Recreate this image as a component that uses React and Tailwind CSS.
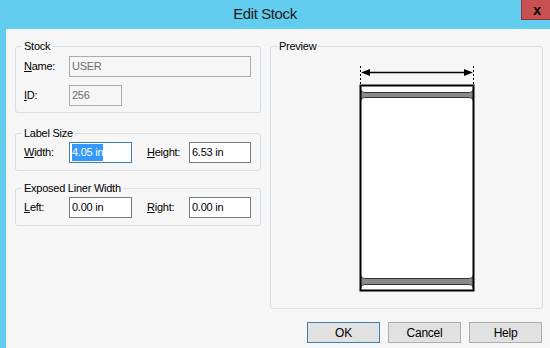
import React from 'react';

function Group({ title, className = '', children }) {
    return (
        <fieldset className={`rounded-[3px] border border-[#d5dfe5] px-[8px] ${className}`}>
            <legend className="-ml-[2px] px-[2px] leading-[14px]">{title}</legend>
            {children}
        </fieldset>
    );
}

// text box look-alike (a real input can't show the forced selection)
function Box({ className = '', disabled, focused, children }) {
    const border = disabled ? 'border-[#acacac] bg-[#f6f6f6] text-[#6d6d6d]' : focused ? 'border-[#3c7fb1] bg-white' : 'border-[#7a7a7a] bg-white';
    return (
        <div className={`h-[21px] border pl-[2px] flex items-center ${border} ${className}`}>
            {children}
        </div>
    );
}

function Label({ k, rest, className = 'w-[45px]' }) {
    return (
        <span className={className}>
            <u>{k}</u>{rest}
        </span>
    );
}

function LabelPreview() {
    return (
        <svg width="130" height="235" viewBox="0 0 130 235" className="block ml-[73px] mt-[9px]">
            <defs>
                <clipPath id="lbl">
                    <rect x="8" y="23" width="114" height="206" />
                </clipPath>
            </defs>
            <line x1="8.5" y1="4" x2="8.5" y2="23" stroke="#000" strokeDasharray="2 2" />
            <line x1="121.5" y1="4" x2="121.5" y2="23" stroke="#000" strokeDasharray="2 2" />
            <line x1="12" y1="10.5" x2="118" y2="10.5" stroke="#000" strokeWidth="1.5" />
            <polygon points="9,10.5 18,7 18,14" fill="#000" />
            <polygon points="121,10.5 112,7 112,14" fill="#000" />
            <g clipPath="url(#lbl)">
                <rect x="8" y="23" width="114" height="206" fill="#8a8a8a" />
                <rect x="8.5" y="10" width="113" height="20.5" rx="4" fill="#fff" stroke="#333" />
                <rect x="8.5" y="35.5" width="113" height="181" rx="4" fill="#fff" stroke="#333" />
                <rect x="8.5" y="222.5" width="113" height="20" rx="4" fill="#fff" stroke="#333" />
            </g>
            <rect x="8.5" y="23.5" width="113" height="205" fill="none" stroke="#000" strokeWidth="2" />
        </svg>
    );
}

export default function App() {
    return (
        <div className="w-[550px] h-[348px] overflow-hidden bg-[#62cdef] flex flex-col font-['Liberation_Sans',Arial,sans-serif] text-[11px] tracking-[-0.25px] text-black">
            {/* title bar */}
            <div className="h-[29px] shrink-0 flex items-center">
                <div className="flex-1 flex justify-center pl-[9px] text-[15px] tracking-[-0.4px] text-[#1a1a1a]">
                    Edit Stock
                </div>
                <div className="self-start w-[29px] h-[20px] bg-[#c75050] border-l border-b border-[#8a3535] flex items-center justify-center pl-[2px] text-[14px] font-bold text-black leading-none">
                    x
                </div>
            </div>

            {/* client area */}
            <div className="flex-1 ml-[6px] bg-[#f6f6f6] pt-[10px] pl-[9px] pr-[7px]">
                <div className="flex gap-[9px]">
                    <div className="w-[246px] flex flex-col">
                        <Group title="Stock" className="pt-[3px] pb-[6px]">
                            <div className="flex items-center">
                                <Label k="N" rest="ame:" />
                                <Box disabled className="w-[182px]">USER</Box>
                            </div>
                            <div className="flex items-center mt-[8px]">
                                <Label k="I" rest="D:" />
                                <Box disabled className="w-[53px]">256</Box>
                            </div>
                        </Group>

                        <Group title="Label Size" className="mt-[13px] pt-[2px] pb-[7px]">
                            <div className="flex items-center">
                                <Label k="W" rest="idth:" />
                                <Box focused className="w-[63px]">
                                    <span className="bg-[#3399ff] text-white">4.05 in</span>
                                </Box>
                                <Label k="H" rest="eight:" className="ml-[15px] w-[42px]" />
                                <Box className="w-[62px]">6.53 in</Box>
                            </div>
                        </Group>

                        <Group title="Exposed Liner Width" className="mt-[10px] pt-[2px] pb-[7px]">
                            <div className="flex items-center">
                                <Label k="L" rest="eft:" />
                                <Box className="w-[63px]">0.00 in</Box>
                                <Label k="R" rest="ight:" className="ml-[15px] w-[42px]" />
                                <Box className="w-[62px]">0.00 in</Box>
                            </div>
                        </Group>
                    </div>

                    <Group title="Preview" className="w-[273px] h-[270px]">
                        <LabelPreview />
                    </Group>
                </div>

                <div className="mt-[13px] pr-[1px] flex justify-end gap-[8px] text-[12px]">
                    <button className="w-[73px] h-[21px] bg-[#e1e1e1] border border-[#3c7fb1]">OK</button>
                    <button className="w-[73px] h-[21px] bg-[#e1e1e1] border border-[#adadad]">Cancel</button>
                    <button className="w-[73px] h-[21px] bg-[#e1e1e1] border border-[#adadad]">Help</button>
                </div>
            </div>
        </div>
    );
}
